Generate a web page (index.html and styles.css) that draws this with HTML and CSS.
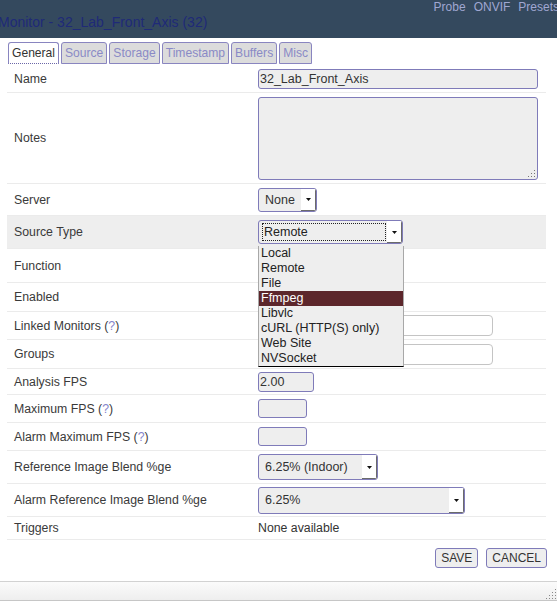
FILE: index.html
```html
<!DOCTYPE html>
<html>
<head>
<meta charset="utf-8">
<link rel="stylesheet" href="styles.css">
</head>
<body>
<div class="header">
  <div class="toplinks"><a class="toplink">Probe</a><a class="toplink">ONVIF</a><a class="toplink">Presets</a></div>
  <h1 class="title">Monitor - 32_Lab_Front_Axis (32)</h1>
</div>

<ul class="tabs">
  <li class="tab active">General</li>
  <li class="tab">Source</li>
  <li class="tab">Storage</li>
  <li class="tab">Timestamp</li>
  <li class="tab">Buffers</li>
  <li class="tab">Misc</li>
</ul>

<div class="form">
  <div class="row r-name">
    <div class="label">Name</div>
    <div class="value"><input class="input w-name" type="text" value="32_Lab_Front_Axis"></div>
  </div>
  <div class="row r-notes">
    <div class="label">Notes</div>
    <div class="value">
      <div class="ta-wrap">
        <textarea class="textarea"></textarea>
        <svg class="ta-grip" width="10" height="10" viewBox="0 0 10 10">
          <rect x="8" y="2" width="1" height="1" fill="#777"/>
          <rect x="5" y="5" width="1" height="1" fill="#777"/>
          <rect x="8" y="5" width="1" height="1" fill="#777"/>
          <rect x="2" y="8" width="1" height="1" fill="#777"/>
          <rect x="5" y="8" width="1" height="1" fill="#777"/>
          <rect x="8" y="8" width="1" height="1" fill="#777"/>
        </svg>
      </div>
    </div>
  </div>
  <div class="row r-server">
    <div class="label">Server</div>
    <div class="value">
      <div class="select s-none"><span class="sval">None</span><span class="sarrow"><svg width="5" height="3" viewBox="0 0 5 3"><path d="M0 0H5L2.5 3Z" fill="#111"/></svg></span></div>
    </div>
  </div>
  <div class="row r-src">
    <div class="label">Source Type</div>
    <div class="value">
      <div class="select-wrap">
        <div class="select s-src"><span class="sval focus">Remote</span><span class="sarrow"><svg width="5" height="3" viewBox="0 0 5 3"><path d="M0 0H5L2.5 3Z" fill="#111"/></svg></span></div>
        <ul class="dropdown">
          <li class="opt">Local</li>
          <li class="opt">Remote</li>
          <li class="opt">File</li>
          <li class="opt sel">Ffmpeg</li>
          <li class="opt">Libvlc</li>
          <li class="opt">cURL (HTTP(S) only)</li>
          <li class="opt">Web Site</li>
          <li class="opt">NVSocket</li>
        </ul>
      </div>
    </div>
  </div>
  <div class="row r-func">
    <div class="label">Function</div>
    <div class="value"></div>
  </div>
  <div class="row r-enabled">
    <div class="label">Enabled</div>
    <div class="value"></div>
  </div>
  <div class="row r-linked">
    <div class="label">Linked Monitors (<a class="help">?</a>)</div>
    <div class="value"><div class="chosen"></div></div>
  </div>
  <div class="row r-groups">
    <div class="label">Groups</div>
    <div class="value"><div class="chosen"></div></div>
  </div>
  <div class="row r-afps">
    <div class="label">Analysis FPS</div>
    <div class="value"><input class="input w-afps" type="text" value="2.00"></div>
  </div>
  <div class="row r-mfps">
    <div class="label">Maximum FPS (<a class="help">?</a>)</div>
    <div class="value"><input class="input w-mfps" type="text" value=""></div>
  </div>
  <div class="row r-amfps">
    <div class="label">Alarm Maximum FPS (<a class="help">?</a>)</div>
    <div class="value"><input class="input w-mfps" type="text" value=""></div>
  </div>
  <div class="row r-blend">
    <div class="label">Reference Image Blend %ge</div>
    <div class="value">
      <div class="select s-blend"><span class="sval">6.25% (Indoor)</span><span class="sarrow"><svg width="5" height="3" viewBox="0 0 5 3"><path d="M0 0H5L2.5 3Z" fill="#111"/></svg></span></div>
    </div>
  </div>
  <div class="row r-ablend">
    <div class="label">Alarm Reference Image Blend %ge</div>
    <div class="value">
      <div class="select s-ablend"><span class="sval">6.25%</span><span class="sarrow"><svg width="5" height="3" viewBox="0 0 5 3"><path d="M0 0H5L2.5 3Z" fill="#111"/></svg></span></div>
    </div>
  </div>
  <div class="row r-trig">
    <div class="label">Triggers</div>
    <div class="value text">None available</div>
  </div>
</div>

<div class="buttons">
  <button class="btn">SAVE</button>
  <button class="btn">CANCEL</button>
</div>

<div class="statusbar">
  <svg class="sb-grip" width="12" height="12" viewBox="0 0 12 12">
    <rect x="10" y="1" width="1" height="1" fill="#888"/>
    <rect x="7" y="4" width="1" height="1" fill="#888"/>
    <rect x="10" y="4" width="1" height="1" fill="#888"/>
    <rect x="4" y="7" width="1" height="1" fill="#888"/>
    <rect x="7" y="7" width="1" height="1" fill="#888"/>
    <rect x="10" y="7" width="1" height="1" fill="#888"/>
    <rect x="1" y="10" width="1" height="1" fill="#888"/>
    <rect x="4" y="10" width="1" height="1" fill="#888"/>
    <rect x="7" y="10" width="1" height="1" fill="#888"/>
    <rect x="10" y="10" width="1" height="1" fill="#888"/>
  </svg>
</div>
</body>
</html>
```

FILE: styles.css
```css
* { box-sizing: border-box; }
html, body {
  margin: 0;
  padding: 0;
  background: #fff;
  font-family: "Liberation Sans", Arial, sans-serif;
  font-size: 12.3px;
  color: #333;
  overflow: hidden;
}
.header {
  background: #34495e;
  height: 38px;
}
.toplinks {
  height: 14px;
  line-height: 14px;
  text-align: right;
  margin-right: -2px;
  white-space: nowrap;
}
.toplink {
  color: #a0a7d2;
  font-size: 12px;
  margin-left: 8px;
}
.title {
  margin: 0 0 0 -2px;
  font-size: 14px;
  font-weight: normal;
  line-height: 16px;
  color: #1f2a78;
  white-space: nowrap;
}
.tabs {
  list-style: none;
  margin: 4px 0 0 8px;
  padding: 0;
  display: flex;
  gap: 2px;
  height: 23px;
}
.tab {
  height: 22px;
  line-height: 20px;
  padding: 0 3px;
  font-size: 12.1px;
  color: #8a8ac6;
  background: #dcdcdc;
  border: 1px solid #8985c0;
  border-radius: 3px 3px 0 0;
}
.tab.active {
  background: #fff;
  color: #333;
  border-bottom: 1px dotted #6a66a8;
}
.form {
  margin: 0 0 0 7px;
  width: 539px;
}
.row {
  display: flex;
  align-items: center;
  border-bottom: 1px solid #ebebeb;
}
.label {
  width: 244px;
  padding-left: 7px;
  color: #3a3a3a;
  white-space: nowrap;
}
.help { color: #8484cc; }
.value {
  flex: 1;
  padding-left: 7px;
  display: flex;
  align-items: center;
}
.value.text { color: #333; }
.r-name { height: 28px; }
.r-notes { height: 91px; }
.r-server { height: 32px; }
.r-src { height: 33px; background: #eeeeee; }
.r-func { height: 34px; }
.r-enabled { height: 29px; }
.r-linked { height: 28px; }
.r-groups { height: 29px; }
.r-afps { height: 26px; }
.r-mfps { height: 28px; }
.r-amfps { height: 28px; }
.r-blend { height: 33px; }
.r-ablend { height: 33px; }
.r-trig { height: 23px; }

.input {
  -webkit-appearance: none;
  appearance: none;
  margin: 0;
  padding: 0 0 0 1px;
  height: 20px;
  border: 1px solid #7f7bb9;
  border-radius: 3px;
  background: #eeeeee;
  font-family: "Liberation Sans", Arial, sans-serif;
  font-size: 12.5px;
  color: #333;
  outline: none;
}
.w-name { width: 280px; }
.w-afps { width: 56px; }
.w-mfps { width: 49px; height: 19px; }

.ta-wrap {
  position: relative;
  width: 280px;
  height: 83px;
}
.textarea {
  display: block;
  width: 280px;
  height: 83px;
  margin: 0;
  border: 1px solid #7f7bb9;
  border-radius: 3px;
  background: #eeeeee;
  resize: none;
  outline: none;
}
.ta-grip {
  position: absolute;
  right: 2px;
  bottom: 2px;
}

.select {
  display: flex;
  align-items: stretch;
  height: 24px;
  border: 1px solid #7f7bb9;
  border-radius: 3px;
  background: #eeeeee;
  overflow: hidden;
}
.sval {
  flex: 1;
  padding-left: 6px;
  display: flex;
  align-items: center;
  font-size: 12.5px;
  color: #333;
  white-space: nowrap;
}
.sval.focus {
  margin: 2px 1px 2px 3px;
  padding-left: 1px;
  border: 1px dotted #222;
  color: #222;
}
.sarrow {
  width: 15px;
  background: #fff;
  box-shadow: inset -1px -1px 0 #6b6b6b;
  display: flex;
  align-items: center;
  justify-content: center;
}
.s-none { width: 59px; }
.s-src { width: 145px; }
.s-blend { width: 120px; height: 26px; }
.s-ablend { width: 207px; height: 27px; }

.select-wrap { position: relative; }
.dropdown {
  position: absolute;
  left: 0;
  top: 100%;
  width: 146px;
  margin: 2px 0 0 0;
  padding: 0;
  list-style: none;
  background: #eeeeee;
  border-left: 1px solid #a8a8a8;
  border-right: 1px solid #a8a8a8;
  border-bottom: 1px solid #000;
  z-index: 5;
}
.opt {
  height: 15px;
  line-height: 15px;
  padding-left: 2px;
  font-size: 12.5px;
  color: #222;
  white-space: nowrap;
}
.opt.sel {
  background: #5c262b;
  color: #fff;
}

.chosen {
  width: 235px;
  height: 21px;
  border: 1px solid #c4c4c4;
  border-radius: 4px;
  background: #fff;
}

.buttons {
  width: 547px;
  margin-top: 8px;
  display: flex;
  justify-content: flex-end;
  gap: 8px;
}
.btn {
  margin: 0;
  height: 20px;
  padding: 0 5px;
  border: 1px solid #7f7bb9;
  border-radius: 3px;
  background: #eeeeee;
  font-family: "Liberation Sans", Arial, sans-serif;
  font-size: 12px;
  color: #333;
}

.statusbar {
  position: relative;
  margin-top: 13px;
  height: 20px;
  border-top: 1px solid #d2d2d2;
  border-bottom: 1px solid #c6c6c6;
  background: linear-gradient(#fbfbfb, #eeeeee);
}
.sb-grip {
  position: absolute;
  right: 0;
  bottom: 0;
}
```
